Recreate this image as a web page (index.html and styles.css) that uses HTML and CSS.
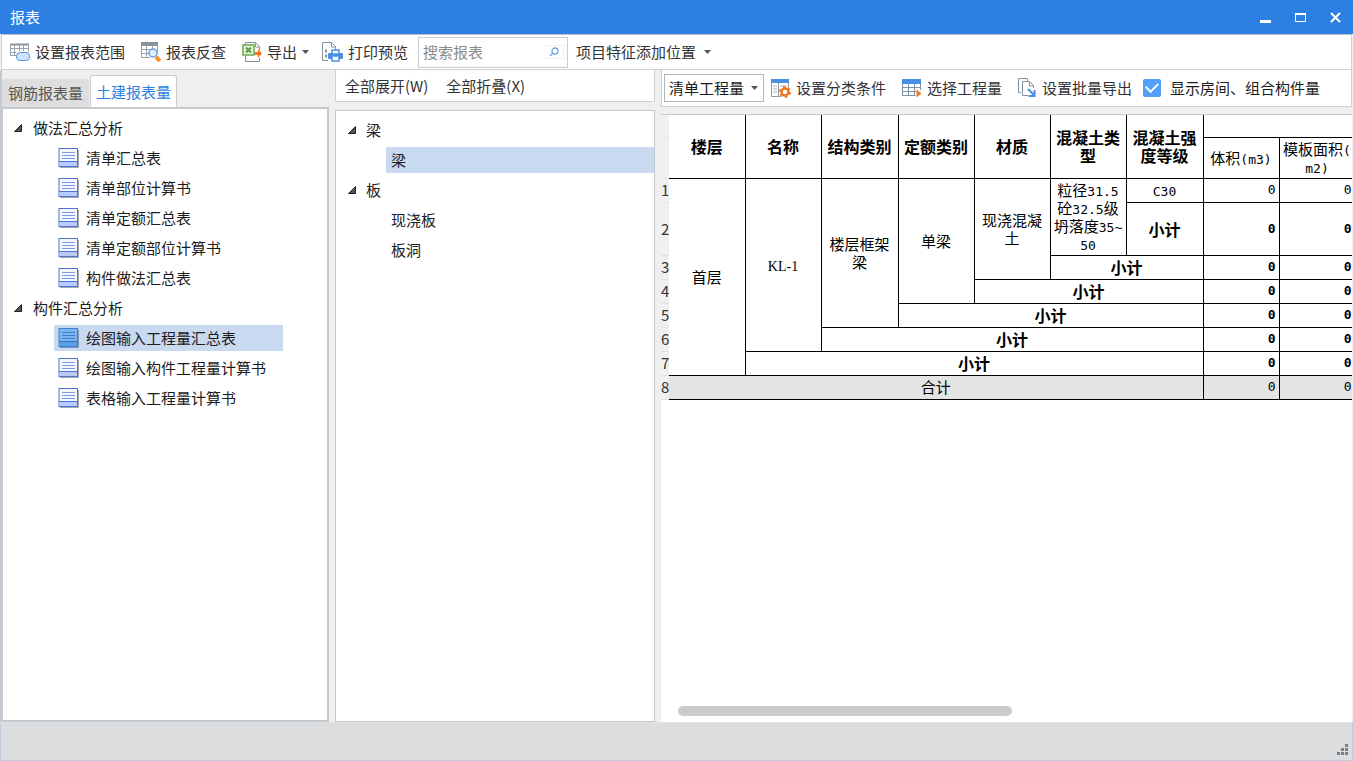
FILE: index.html
```
<!DOCTYPE html>
<html lang="zh-CN">
<head>
<meta charset="utf-8">
<title>报表</title>
<link rel="stylesheet" href="styles.css">
</head>
<body>
<svg class="defs" aria-hidden="true">
  <symbol id="doc" viewBox="0 0 21 20">
    <path d="M2 19.500h18.500V2" fill="none" stroke="#a3a6ae" stroke-width="1"/>
    <rect x="1" y=".5" width="18.500" height="18" fill="#f4f7ff" stroke="#4f74cc"/>
    <rect x="1.500" y="13" width="17.500" height="5" fill="#b9caff"/>
    <path d="M1 13.500h18" stroke="#4f74cc"/>
    <path d="M4 4.500h13M4 7.500h13M4 10.500h13" stroke="#7d9be0"/>
  </symbol>
  <symbol id="doc-on" viewBox="0 0 21 20">
    <path d="M2 19.500h18.500V2" fill="none" stroke="#7f95b5" stroke-width="1"/>
    <rect x="1" y=".5" width="18.500" height="18" fill="#7db4ee" stroke="#3c7fd0"/>
    <rect x="1.500" y="13" width="17.500" height="5" fill="#5b9fe8"/>
    <path d="M1 13.500h18" stroke="#3474c4"/>
    <path d="M4 4.500h13M4 7.500h13M4 10.500h13" stroke="#3c7fd0"/>
  </symbol>
  <symbol id="tri" viewBox="0 0 8 8"><path d="M7.500 .5v7H.5z" fill="#555" stroke="#222"/></symbol>
</svg>
<div class="window">
  <header class="title-bar">
    <h1>报表</h1>
    <div class="window-buttons">
      <button type="button" aria-label="最小化"><svg width="11" height="11"><path d="M0 9.500h11" stroke="#fff" stroke-width="3"/></svg></button>
      <button type="button" aria-label="最大化"><svg width="11" height="11"><path d="M.5 1v8.500h10V1" fill="none" stroke="#fff"/><path d="M0 2h11" stroke="#fff" stroke-width="2"/></svg></button>
      <button type="button" aria-label="关闭"><svg width="11" height="11"><path d="M1 1l9 9M10 1l-9 9" stroke="#fff" stroke-width="2"/></svg></button>
    </div>
  </header>

  <div class="toolbar main-toolbar">
    <button type="button" class="tool">
      <svg width="20" height="20"><path d="M0 2.500h19" stroke="#87939a" stroke-width="2"/><path d="M.5 2v12M4.500 2v12M9.500 2v7M13.500 2v7M18.500 2v8M0 6.500h19M0 10.500h6M0 13.500h6" fill="none" stroke="#98a2a9"/><rect x="6.500" y="10.500" width="13" height="8" rx="3.500" fill="#cfe3fb" stroke="#5c96dc"/></svg>
      设置报表范围
    </button>
    <button type="button" class="tool">
      <svg width="20" height="20"><rect x="0" y="0" width="17" height="4" fill="#87939a"/><path d="M.5 3v13M5.500 3v13M11.500 3v5M16.500 3v7M0 7.500h9M0 11.500h8M0 15.500h9" fill="none" stroke="#98a2a9"/><circle cx="12" cy="11" r="4" fill="#e4effd" stroke="#6d9ee0" stroke-width="1.500"/><path d="M15 15l4 4" stroke="#f6921e" stroke-width="4"/></svg>
      报表反查
    </button>
    <button type="button" class="tool has-menu">
      <svg width="20" height="20"><path d="M3.500 3V.5h10l4 4V8M3.500 14v5.500h14V16" fill="#fff" stroke="#87939a"/><path d="M13.500 1v4h4" fill="none" stroke="#87939a"/><rect x="1" y="3" width="11" height="10" fill="#e9f5e2" stroke="#6aa84f" stroke-width="1.500"/><path d="M4 5.500l5 5M9 5.500l-5 5" stroke="#5a9e3e" stroke-width="2"/><path d="M13 10h3V7l4 4.500-4 4.500v-3h-3z" fill="#f47621"/></svg>
      导出
      <svg class="caret" width="8" height="4"><path d="M0 0h7L3.500 4z" fill="#555"/></svg>
    </button>
    <button type="button" class="tool">
      <svg width="21" height="20"><path d="M6 18.500H.5V.5h9l4 4V8" fill="#fff" stroke="#87939a"/><path d="M9.500 1v4h4" fill="none" stroke="#87939a"/><path d="M3 9h2M3 14h2" stroke="#87939a" stroke-width="3"/><rect x="6" y="11" width="15" height="6" rx="1" fill="#4a90e2"/><rect x="10" y="8" width="7" height="4" fill="#fff" stroke="#4a90e2" stroke-width="1.500"/><rect x="10" y="14" width="7" height="5" fill="#fff" stroke="#4a90e2" stroke-width="1.500"/></svg>
      打印预览
    </button>
    <div class="search">
      <input type="text" placeholder="搜索报表" aria-label="搜索报表">
      <button type="button" aria-label="搜索"><svg width="10" height="10"><circle cx="6" cy="4" r="3" fill="none" stroke="#68abee" stroke-width="1.300"/><path d="M4 6L1 9" stroke="#68abee" stroke-width="1.500"/></svg></button>
    </div>
    <button type="button" class="tool has-menu">项目特征添加位置
      <svg class="caret wide-gap" width="8" height="4"><path d="M0 0h7L3.500 4z" fill="#555"/></svg>
    </button>
  </div>

  <main class="content">
    <section class="report-list">
      <div class="tabs" role="tablist">
        <button type="button" role="tab" aria-selected="false" class="tab">钢筋报表量</button>
        <button type="button" role="tab" aria-selected="true" class="tab active">土建报表量</button>
      </div>
      <ul class="tree reports" role="tree">
        <li class="group"><svg width="8" height="8"><use href="#tri"/></svg>做法汇总分析</li>
        <li class="leaf"><svg width="21" height="20"><use href="#doc"/></svg>清单汇总表</li>
        <li class="leaf"><svg width="21" height="20"><use href="#doc"/></svg>清单部位计算书</li>
        <li class="leaf"><svg width="21" height="20"><use href="#doc"/></svg>清单定额汇总表</li>
        <li class="leaf"><svg width="21" height="20"><use href="#doc"/></svg>清单定额部位计算书</li>
        <li class="leaf"><svg width="21" height="20"><use href="#doc"/></svg>构件做法汇总表</li>
        <li class="group"><svg width="8" height="8"><use href="#tri"/></svg>构件汇总分析</li>
        <li class="leaf selected"><svg width="21" height="20"><use href="#doc-on"/></svg>绘图输入工程量汇总表</li>
        <li class="leaf"><svg width="21" height="20"><use href="#doc"/></svg>绘图输入构件工程量计算书</li>
        <li class="leaf"><svg width="21" height="20"><use href="#doc"/></svg>表格输入工程量计算书</li>
      </ul>
    </section>

    <section class="parts">
      <div class="toolbar parts-toolbar">
        <button type="button" class="tool">全部展开(W)</button>
        <button type="button" class="tool">全部折叠(X)</button>
      </div>
      <ul class="tree components" role="tree">
        <li class="group"><svg width="8" height="8"><use href="#tri"/></svg>梁</li>
        <li class="leaf selected">梁</li>
        <li class="group"><svg width="8" height="8"><use href="#tri"/></svg>板</li>
        <li class="leaf">现浇板</li>
        <li class="leaf">板洞</li>
      </ul>
    </section>

    <section class="report">
      <div class="toolbar report-toolbar">
        <div class="picker">
          <select aria-label="工程量类型"><option>清单工程量</option></select>
          <svg class="caret" width="8" height="4"><path d="M0 0h7L3.500 4z" fill="#555"/></svg>
        </div>
        <button type="button" class="tool">
          <svg width="20" height="20"><path d="M.5 1v17.500h9M17.500 4v5" fill="none" stroke="#939ca3"/><rect x="0" y="1" width="18" height="4" fill="#4a90e2"/><path d="M7.500 5v14" stroke="#939ca3"/><path d="M2 8h4M2 11h4M2 14h4M9 8h6" stroke="#a9b2b8"/><circle cx="14" cy="14" r="3.500" fill="#fff" stroke="#f47621" stroke-width="2.500"/><circle cx="14" cy="14" r="5" fill="none" stroke="#f47621" stroke-width="2" stroke-dasharray="2.600 2.600"/></svg>
          设置分类条件
        </button>
        <button type="button" class="tool">
          <svg width="20" height="20"><rect x="0" y="1" width="19" height="5" fill="#4a90e2"/><path d="M.5 6v11.500h13M6.500 6v11M12.500 6v11M18.500 6v6M0 9.500h19M0 13.500h14" fill="none" stroke="#7f93a6"/><path d="M14.500 11.500v8l5-4z" fill="#f47621"/></svg>
          选择工程量
        </button>
        <button type="button" class="tool">
          <svg width="19" height="20"><path d="M3 14.500H.5V.5h9V3" fill="none" stroke="#87939a"/><path d="M10 17.500H4.500V3.500h7l4 4V10" fill="none" stroke="#87939a"/><path d="M11.500 4v4h4" fill="none" stroke="#87939a"/><path d="M10 11l6 6M16.500 12v6h-6" fill="none" stroke="#4a90e2" stroke-width="2"/></svg>
          设置批量导出
        </button>
        <label class="check"><input type="checkbox" checked>显示房间、组合构件量</label>
      </div>

      <div class="sheet">
        <table>
          <colgroup><col class="gutter"><col><col><col class="wide"><col><col><col><col class="wide"><col><col></colgroup>
          <thead>
            <tr class="head-top"><th class="no"></th><th class="edge" rowspan="2">楼层</th><th rowspan="2">名称</th><th rowspan="2">结构类别</th><th rowspan="2">定额类别</th><th rowspan="2">材质</th><th rowspan="2">混凝土类<br>型</th><th rowspan="2">混凝土强<br>度等级</th><th colspan="2"></th></tr>
            <tr class="head-sub"><th class="no"></th><td>体积<span class="mono">(m3)</span></td><td>模板面积<span class="mono">(<br>m2)</span></td></tr>
          </thead>
          <tbody>
            <tr><th class="no">1</th><td class="edge" rowspan="7">首层</td><td rowspan="6"><span class="mono serif">KL-1</span></td><td rowspan="5">楼层框架<br>梁</td><td rowspan="4">单梁</td><td rowspan="3">现浇混凝<br>土</td><td rowspan="2">粒径<span class="mono">31.5</span><br>砼<span class="mono">32.5</span>级<br>坍落度<span class="mono">35~</span><br><span class="mono">50</span></td><td><span class="mono">C30</span></td><td class="value">0</td><td class="value">0</td></tr>
            <tr class="tall"><th class="no">2</th><th>小计</th><th class="value">0</th><th class="value">0</th></tr>
            <tr><th class="no">3</th><th colspan="2">小计</th><th class="value">0</th><th class="value">0</th></tr>
            <tr><th class="no">4</th><th colspan="3">小计</th><th class="value">0</th><th class="value">0</th></tr>
            <tr><th class="no">5</th><th colspan="4">小计</th><th class="value">0</th><th class="value">0</th></tr>
            <tr><th class="no">6</th><th colspan="5">小计</th><th class="value">0</th><th class="value">0</th></tr>
            <tr><th class="no">7</th><th colspan="6">小计</th><th class="value">0</th><th class="value">0</th></tr>
            <tr class="total"><th class="no">8</th><td class="edge" colspan="7">合计</td><td class="value">0</td><td class="value">0</td></tr>
          </tbody>
        </table>
      </div>
      <div class="scroll-track"><div class="scroll-thumb"></div></div>
    </section>
  </main>

  <footer class="status-bar">
    <svg width="12" height="12"><path d="M8 0h3v3H8zM4 4h3v3H4zM8 4h3v3H8zM0 8h3v3H0zM4 8h3v3H4zM8 8h3v3H8z" fill="#777e88"/></svg>
  </footer>
</div>
</body>
</html>
```
FILE: styles.css
```
* { box-sizing: border-box; }

body {
  margin: 0;
  font: 15px/20px "Noto Sans CJK SC", sans-serif;
  color: #1c1c1c;
}

button, input, select { font: inherit; color: inherit; }
button { border: 0; padding: 0; background: none; white-space: nowrap; }
svg { display: block; flex: none; }
.defs { position: absolute; width: 0; height: 0; }

.window {
  display: flex;
  flex-direction: column;
  height: 100vh;
  background: #efefef;
  overflow: hidden;
}

.title-bar {
  display: flex;
  align-items: center;
  justify-content: space-between;
  height: 34px;
  flex: none;
  padding: 0 12px 0 10px;
  background: #2d7fe2;
  color: #fff;
}
.title-bar h1 { margin: 0; font-size: 15px; font-weight: 400; }
.window-buttons { display: flex; gap: 24px; }

.toolbar {
  display: flex;
  align-items: center;
  flex: none;
  background: #fff;
  border: 1px solid #cdd0d4;
}
.tool {
  display: flex;
  align-items: center;
  gap: 5px;
  height: 28px;
  padding: 0 8px;
  color: #333;
}
.tool.has-menu { padding-right: 4px; }
.caret.wide-gap { margin-left: 3px; }

.main-toolbar { height: 36px; margin: 0 1px; border-top-color: #b9bfcc; }

.search {
  display: flex;
  align-items: center;
  width: 150px;
  height: 31px;
  margin-left: 2px;
  padding-right: 3px;
  border: 1px solid #c9cdd1;
}
.search input {
  flex: 1;
  min-width: 0;
  padding: 0 4px;
  border: 0;
  outline: 0;
  background: none;
}
.search input::placeholder { color: #8a8a8a; opacity: 1; }
.search button {
  display: flex;
  align-items: center;
  justify-content: center;
  width: 20px;
  height: 14px;
  border: solid #f0f0f0;
  border-width: 1px 1px 1px 0;
}

.content {
  display: flex;
  flex: 1;
  min-height: 0;
  padding-right: 1px;
  border-left: 2px solid #c3cad4;
}

.report-list {
  display: flex;
  flex-direction: column;
  width: 327px;
  flex: none;
  padding-top: 5px;
}
.tabs { display: flex; align-items: flex-end; height: 32px; flex: none; }
.tab {
  width: 87px;
  height: 28px;
  border-radius: 3px 3px 0 0;
  background: #dedede;
  color: #555;
}
.tab.active {
  height: 32px;
  margin-left: 1px;
  border: 1px solid #c8ccd0;
  border-bottom: 0;
  background: #fff;
  color: #2d7fe2;
}

.tree {
  flex: 1;
  margin: 0;
  padding: 0;
  list-style: none;
  background: #fff;
}
.tree li { display: flex; align-items: center; height: 26px; margin-bottom: 4px; }
.reports { padding: 6px 0 0 11px; border: solid #c4c9ce; border-width: 2px 2px 2px 1px; }
.group { gap: 11px; }
.reports .leaf { width: 229px; margin-left: 40px; padding-left: 4px; gap: 7px; white-space: nowrap; }
.tree .selected { background: #c9d9f0; }

.parts {
  display: flex;
  flex-direction: column;
  gap: 8px;
  width: 320px;
  flex: none;
  margin-left: 6px;
}
.parts-toolbar { height: 32px; padding-left: 1px; border-top: 0; gap: 2px; }
.parts-toolbar .tool { padding: 0 8px; }
.components { padding: 6px 0 0 12px; border: 1px solid #c4c9ce; }
.components .leaf { margin-left: 38px; padding-left: 5px; }
.components .group { gap: 10px; }

.report {
  display: flex;
  flex-direction: column;
  flex: 1;
  min-width: 0;
  margin-left: 6px;
}
.report-toolbar { height: 37px; padding-left: 2px; border-top: 0; }
.report-toolbar .tool { padding: 0 9px 0 7px; gap: 5px; }
.picker {
  position: relative;
  width: 100px;
  height: 28px;
  border: 1px solid #b4b7ba;
}
.picker select {
  width: 100%;
  height: 100%;
  padding: 0 0 0 4px;
  border: 0;
  appearance: none;
  background: none;
}
.picker .caret { position: absolute; right: 4px; top: 11px; }
.check { display: flex; align-items: center; gap: 9px; margin-left: 2px; white-space: nowrap; }
.check input {
  display: flex;
  align-items: center;
  justify-content: center;
  appearance: none;
  width: 18px;
  height: 18px;
  margin: 0;
  border-radius: 2px;
  background: #52a0fb;
}
.check input:checked::before {
  content: "";
  width: 10px;
  height: 6px;
  margin-bottom: 4px;
  border: solid #fff;
  border-width: 0 0 2px 2px;
  transform: rotate(-45deg);
}

.sheet {
  flex: 1;
  min-height: 0;
  margin-top: 7px;
  overflow: hidden;
  background: #fff;
  border-top: 1px solid #c8c8c8;
}
table {
  width: 694px;
  table-layout: fixed;
  border-collapse: collapse;
  line-height: 18px;
  color: #000;
}
col { width: 76px; }
col.wide { width: 77px; }
col.gutter { width: 8px; }
td, th { padding: 0; border: 1px solid #000; text-align: center; height: 24px; }
th { font-size: 16px; font-weight: 700; }
thead tr:first-child th { border-top: 0; }
.head-top th { height: 22px; }
.head-sub td, .head-sub th { height: 41px; }
.tall th { height: 53px; }
th.edge, td.edge { border-left: 0; }
th.no {
  border: 1px solid #e2e2e2;
  border-width: 1px 0;
  background: #f0f0f0;
  font-size: 15px;
  font-weight: 400;
  color: #333;
}
.mono { font-family: "DejaVu Sans Mono", monospace; font-size: 13px; line-height: 0; }
.mono.serif { font-family: "Liberation Serif", serif; font-size: 14px; }
td.value, th.value { padding-right: 3px; text-align: right; font-family: "DejaVu Sans Mono", monospace; font-size: 13px; }
.total td { background: #e4e4e4; }

.scroll-track { flex: none; padding: 0 0 6px 17px; background: #fff; }
.scroll-thumb { width: 49.5%; height: 10px; min-width: 40px; border-radius: 5px; background: #cbcbcb; }

.status-bar {
  display: flex;
  align-items: flex-end;
  justify-content: flex-end;
  height: 39px;
  flex: none;
  padding: 0 3px 4px;
  border: 1px solid #c3cad9;
  border-top-color: #e2e3e5;
  background: #dcdddf;
}
```
